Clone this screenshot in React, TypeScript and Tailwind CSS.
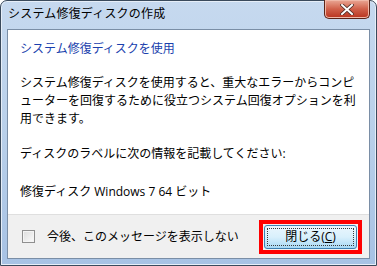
export default function App() {
  const font = { fontFamily: '"Open Sans", "Noto Sans CJK JP", sans-serif' }

  return (
    <div className="w-[377px] h-[266px] bg-white" style={font}>
      <div className="w-[377px] h-[266px] flex flex-col rounded-t-[7px] border border-[#3a4a5c] bg-gradient-to-b from-[#c6d9ef] via-[#b9d0ea] to-[#a7c2e4] shadow-[inset_0_0_0_1px_#e6eef8]">
        {/* title bar */}
        <div className="h-[28px] flex items-start justify-between pl-[7px] pr-[6px]">
          <div className="pt-[4px] text-[12px] leading-[18px] text-black tracking-[0.2px]">
            システム修復ディスクの作成
          </div>
          <div className="w-[46px] h-[19px] -mt-px rounded-b-[5px] border border-[#5b2418] border-t-0 bg-gradient-to-b from-[#e9a795] via-[#d0604a] to-[#b8321c] flex items-center justify-center shadow-[inset_0_0_0_1px_#f0b8a8]">
            <svg width="14" height="11" viewBox="0 0 14 11">
              <path d="M2 1 L12 10 M12 1 L2 10" stroke="#4a2a24" strokeWidth="3.6" strokeLinecap="square" />
              <path d="M2 1 L12 10 M12 1 L2 10" stroke="#ffffff" strokeWidth="2" strokeLinecap="square" />
            </svg>
          </div>
        </div>

        {/* inner panel */}
        <div className="mx-[6px] h-[230px] border border-[#7a8ea6] flex flex-col">
          <div className="h-[184px] bg-white pl-[12px] pr-[10px] pt-[10px] text-[12px] text-black">
            <div className="leading-[18px] text-[#1a3fad]">システム修復ディスクを使用</div>
            <div className="mt-[16px] leading-[18px]">
              システム修復ディスクを使用すると、重大なエラーからコンピューターを回復するために役立つシステム回復オプションを利用できます。
            </div>
            <div className="mt-[17px] leading-[18px]">ディスクのラベルに次の情報を記載してください:</div>
            <div className="mt-[20px] leading-[18px]">修復ディスク Windows 7 64 ビット</div>
          </div>
          <div className="flex-1 bg-[#f0f0f0] border-t border-[#dfdfdf] flex items-center justify-between pl-[14px] pr-[7px]">
            <div className="flex items-center gap-[12px] text-[12px] leading-[18px] text-black">
              <div className="w-[13px] h-[13px] border border-[#8f8f8f] bg-gradient-to-br from-[#dcdcdc] to-[#fbfbfb] shadow-[inset_0_0_0_1px_#f4f4f4]" />
              <span>今後、このメッセージを表示しない</span>
            </div>
            <div className="border-[4px] border-[#ff0000] p-[1px] mt-[1px]">
              <div className="w-[93px] h-[24px] rounded-[3px] border border-[#3c7fb1] bg-gradient-to-b from-[#eaf6fd] via-[#d9f0fc] to-[#a7d9f5] p-[2px]">
                <div className="h-full border border-dotted border-[#3a3a3a] flex items-center justify-center text-[12px] leading-[16px] text-black">
                  閉じる(<span className="underline">C</span>)
                </div>
              </div>
            </div>
          </div>
        </div>
      </div>
    </div>
  )
}
